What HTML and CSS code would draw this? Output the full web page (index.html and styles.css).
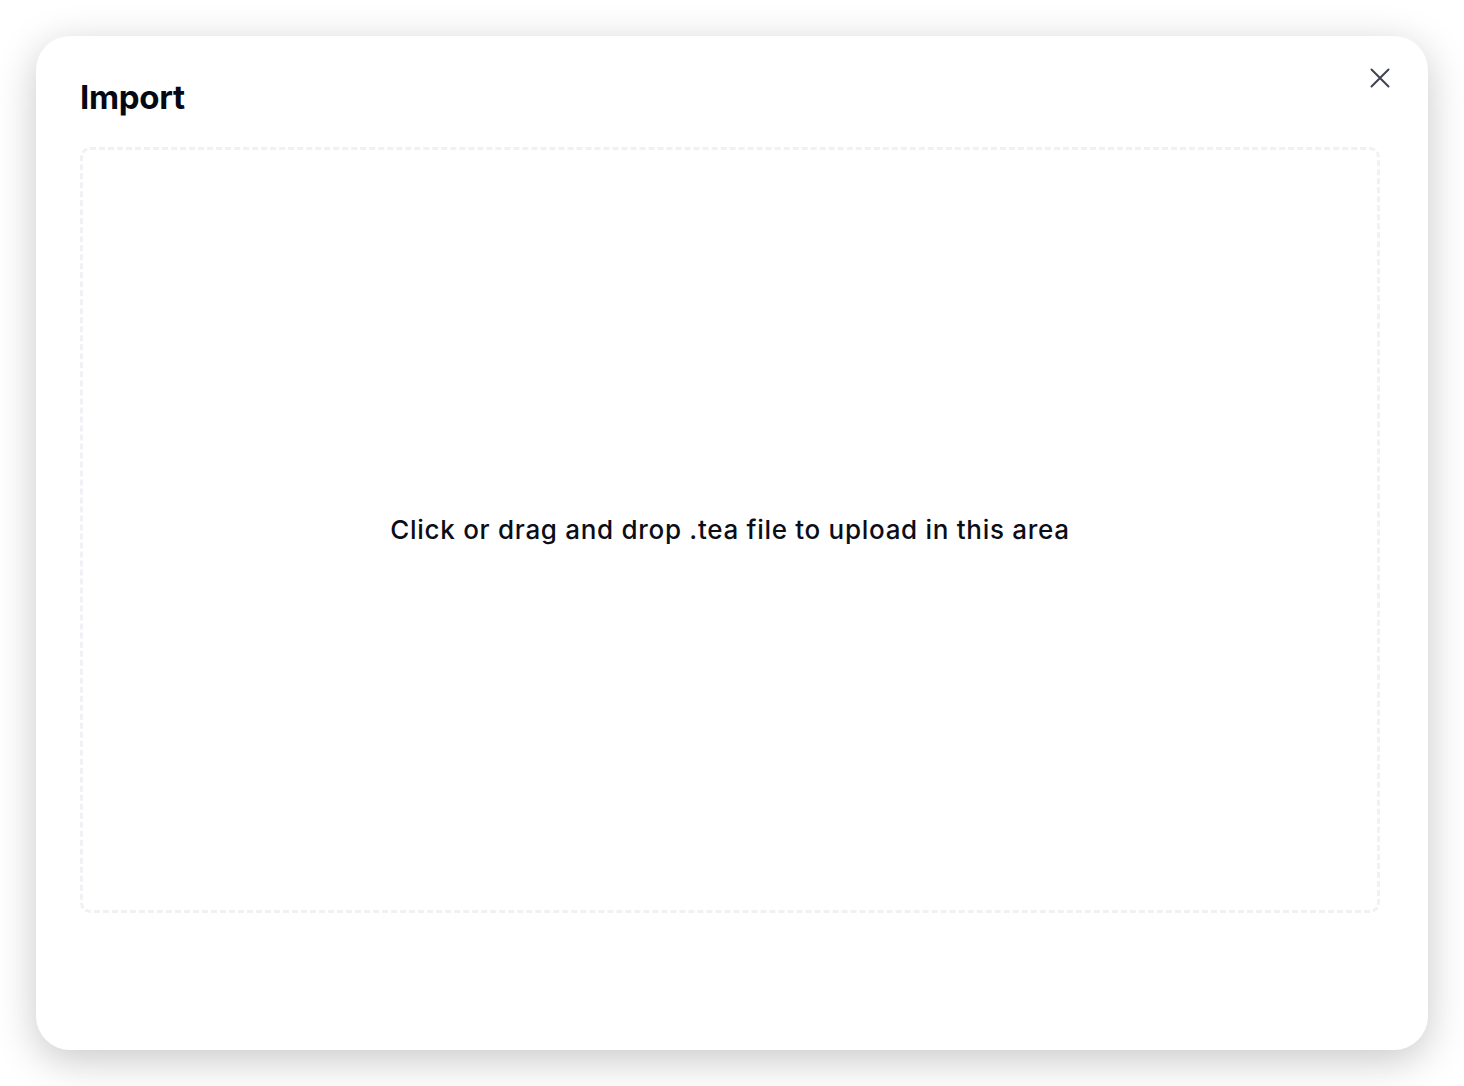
FILE: index.html
```html
<!DOCTYPE html>
<html lang="en">
<head>
<meta charset="utf-8">
<title>Import</title>
<link rel="stylesheet" href="styles.css">
</head>
<body>
<div class="page">
  <div class="modal">
    <div class="modal-header">
      <h1 class="modal-title">Import</h1>
      <button class="close-btn" aria-label="Close">
        <svg width="20" height="20" viewBox="0 0 20 20" fill="none" stroke="#3f4350" stroke-width="2" stroke-linecap="round">
          <path d="M1.5 1.5 L18.5 18.5 M18.5 1.5 L1.5 18.5"/>
        </svg>
      </button>
    </div>
    <div class="dropzone">
      <p class="dropzone-text">Click or drag and drop .tea file to upload in this area</p>
    </div>
  </div>
</div>
</body>
</html>
```
FILE: styles.css
```css
html, body {
  margin: 0;
  padding: 0;
  background: #ffffff;
}
body {
  font-family: Inter, "Noto Sans", "Liberation Sans", sans-serif;
  color: #0b0d17;
}
.page {
  width: 1464px;
  height: 1086px;
  padding: 36px;
  box-sizing: border-box;
}
.modal {
  width: 1392px;
  height: 1014px;
  box-sizing: border-box;
  background: #ffffff;
  border-radius: 34px;
  box-shadow: 0 10px 40px rgba(0, 0, 0, 0.22);
  padding: 41px 38px 137px 44px;
  display: flex;
  flex-direction: column;
}
.modal-header {
  display: flex;
  justify-content: space-between;
  align-items: flex-start;
  height: 70px;
}
.modal-title {
  margin: 0;
  font-size: 33px;
  line-height: 40px;
  font-weight: 700;
  letter-spacing: -0.3px;
  color: #060914;
}
.close-btn {
  background: none;
  border: none;
  padding: 0;
  margin-top: -9px;
  width: 20px;
  height: 20px;
  cursor: pointer;
  display: flex;
}
.dropzone {
  flex: 1;
  border: 3px dashed #eff1f4;
  border-radius: 10px;
  display: flex;
  align-items: center;
  justify-content: center;
  width: 1300px;
  box-sizing: border-box;
}
.dropzone-text {
  margin: 0;
  font-size: 26px;
  line-height: 32px;
  font-weight: 500;
  letter-spacing: 0.7px;
  color: #0b0d17;
}
```
